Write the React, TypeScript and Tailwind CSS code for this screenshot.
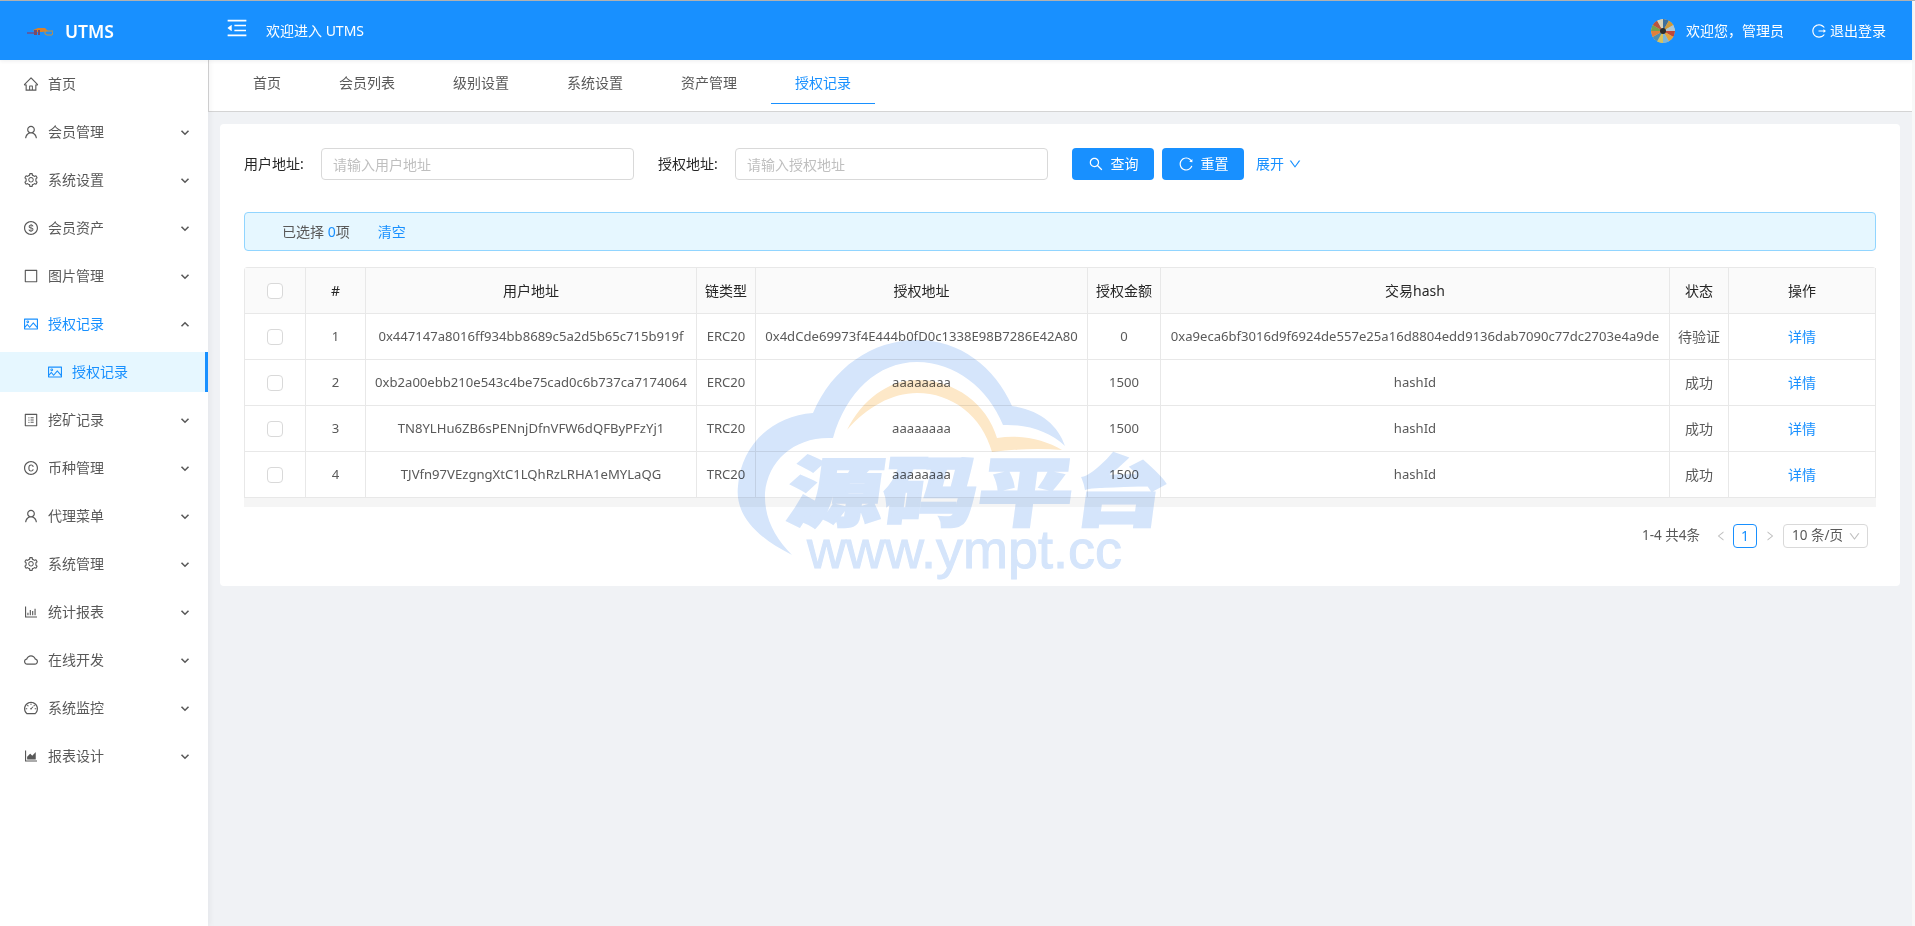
import type { ReactNode } from "react";
import {
  AiOutlineAreaChart,
  AiOutlineBarChart,
  AiOutlineBorder,
  AiOutlineCloud,
  AiOutlineCopyrightCircle,
  AiOutlineDashboard,
  AiOutlineDollarCircle,
  AiOutlineDown,
  AiOutlineHome,
  AiOutlineLeft,
  AiOutlineLogout,
  AiOutlineMenuFold,
  AiOutlinePicture,
  AiOutlineProfile,
  AiOutlineReload,
  AiOutlineRight,
  AiOutlineSearch,
  AiOutlineSetting,
  AiOutlineUser,
} from "react-icons/ai";

const menu: { icon: ReactNode; label: string; noArrow?: boolean; open?: boolean }[] = [
  { icon: <AiOutlineHome />, label: "首页", noArrow: true },
  { icon: <AiOutlineUser />, label: "会员管理" },
  { icon: <AiOutlineSetting />, label: "系统设置" },
  { icon: <AiOutlineDollarCircle />, label: "会员资产" },
  { icon: <AiOutlineBorder />, label: "图片管理" },
  { icon: <AiOutlinePicture />, label: "授权记录", open: true },
  { icon: <AiOutlineProfile />, label: "挖矿记录" },
  { icon: <AiOutlineCopyrightCircle />, label: "币种管理" },
  { icon: <AiOutlineUser />, label: "代理菜单" },
  { icon: <AiOutlineSetting />, label: "系统管理" },
  { icon: <AiOutlineBarChart />, label: "统计报表" },
  { icon: <AiOutlineCloud />, label: "在线开发" },
  { icon: <AiOutlineDashboard />, label: "系统监控" },
  { icon: <AiOutlineAreaChart />, label: "报表设计" },
];

const tabs = ["首页", "会员列表", "级别设置", "系统设置", "资产管理", "授权记录"];

const rows = [
  ["1", "0x447147a8016ff934bb8689c5a2d5b65c715b919f", "ERC20", "0x4dCde69973f4E444b0fD0c1338E98B7286E42A80", "0", "0xa9eca6bf3016d9f6924de557e25a16d8804edd9136dab7090c77dc2703e4a9de", "待验证"],
  ["2", "0xb2a00ebb210e543c4be75cad0c6b737ca7174064", "ERC20", "aaaaaaaa", "1500", "hashId", "成功"],
  ["3", "TN8YLHu6ZB6sPENnjDfnVFW6dQFByPFzYj1", "TRC20", "aaaaaaaa", "1500", "hashId", "成功"],
  ["4", "TJVfn97VEzgngXtC1LQhRzLRHA1eMYLaQG", "TRC20", "aaaaaaaa", "1500", "hashId", "成功"],
];

const wedges = ["#c0483a", "#e2a33c", "#7fb6d8", "#d9c25a", "#4d8fb0", "#e0803a", "#76a04f", "#b8553f", "#d8d2b8", "#3f6f9a", "#cf9a3a", "#a9c7d9"];

const Chevron = ({ up = false }: { up?: boolean }) => (
  <svg width="10" height="7" viewBox="0 0 10 7" className="ml-auto mr-[18px]" fill="none" stroke="#595959" strokeWidth="1.6">
    <path d={up ? "M1.5 5.2 5 1.8l3.5 3.4" : "M1.5 1.8 5 5.2l3.5-3.4"} />
  </svg>
);

const Checkbox = () => (
  <span className="mx-auto block w-4 h-4 bg-white border border-[#d9d9d9] rounded-sm" />
);

const Avatar = () => (
  <svg width="24" height="24" viewBox="0 0 24 24" className="rounded-full">
    <circle cx="12" cy="12" r="12" fill="#c9c2a8" />
    {wedges.map((c, i) => {
      const a0 = (i * Math.PI) / 6;
      const a1 = ((i + 1) * Math.PI) / 6;
      return (
        <path
          key={i}
          fill={c}
          d={`M12 12L${12 + 12 * Math.cos(a0)} ${12 + 12 * Math.sin(a0)}A12 12 0 0 1 ${12 + 12 * Math.cos(a1)} ${12 + 12 * Math.sin(a1)}Z`}
        />
      );
    })}
    <circle cx="12" cy="12" r="3" fill="#2b2b2b" />
  </svg>
);

const Logo = () => (
  <svg width="26" height="9" viewBox="0 0 26 9" className="mr-3">
    <path d="M0 5h8v2H0z" fill="#5a5fa8" />
    <path d="M6 3 11 1h7l3 3-6 1H8z" fill="#d9822b" />
    <path d="M7 3h3v5H7zM11 3h2v5h-2z" fill="#7a4a6a" />
    <path d="M18 4h8v1l-1 3h-5l-2-1z" fill="none" stroke="#c9913a" strokeWidth="1" />
  </svg>
);

const Watermark = () => (
  <div className="absolute left-[730px] top-[335px] w-[445px] h-[250px] pointer-events-none mix-blend-multiply">
    <svg width="445" height="250" viewBox="730 335 445 250" className="absolute inset-0">
      <path
        fill="#d5e5fb"
        d="M792 555C752 535 735 512 738 486C741 445 772 416 813 413C832 368 872 340 917 340C960 340 995 367 1012 406C1040 410 1058 425 1065 446C1050 432 1028 424 1003 425C988 388 955 362 917 362C878 362 846 392 833 438C795 436 768 460 765 493C764 518 775 538 792 555Z"
      />
      <path
        fill="#fde8c8"
        d="M847 430C862 400 888 380 917 380C955 380 987 404 997 438C1022 434 1045 440 1062 450C1040 448 1015 449 992 452C982 416 952 393 917 393C892 393 867 407 847 430Z"
      />
    </svg>
    <div className="absolute left-[64px] top-[114px] text-[95px] leading-none whitespace-nowrap origin-top -skew-x-6 scale-y-[0.8] font-black text-[#d5e5fb] [-webkit-text-stroke:3px_#d5e5fb] font-['Noto_Sans_CJK_SC',sans-serif]">
      源码平台
    </div>
    <div className="absolute left-[77px] top-[187px] text-[54px] leading-none whitespace-nowrap text-[#d5e5fb] [-webkit-text-stroke:1px_#d5e5fb] font-['Liberation_Sans',sans-serif]">
      www.ympt.cc
    </div>
  </div>
);

export default function App() {
  return (
    <div className="relative flex flex-col h-screen overflow-hidden bg-[#f8f8f8] text-sm text-[#595959] font-['Noto_Sans','Noto_Sans_CJK_SC',sans-serif]">
      <div className="h-px bg-[#b4b4b4] shrink-0" />
      <div className="flex flex-col flex-1 min-h-0 mr-[3px]">
        <header className="relative z-10 flex items-center h-[59px] shrink-0 bg-[#1890ff] text-white shadow-[0_1px_4px_rgba(0,21,41,0.08)]">
          <div className="flex items-center w-[225px] pl-[27px] pt-px">
            <Logo />
            <span className="text-[17.5px] font-semibold">UTMS</span>
          </div>
          <AiOutlineMenuFold className="text-[24px] mb-[5px]" />
          <span className="ml-[17px]">欢迎进入 UTMS</span>
          <div className="flex items-center ml-auto mr-[26px]">
            <Avatar />
            <span className="ml-[11px]">欢迎您，管理员</span>
            <AiOutlineLogout className="ml-[27px] mr-[3px] text-base" />
            <span>退出登录</span>
          </div>
        </header>

        <div className="flex flex-1 min-h-0">
          <aside className="w-[208px] shrink-0 bg-white shadow-[2px_0_6px_rgba(0,21,41,0.05)] z-[1]">
            {menu.map((m) => (
              <div key={m.label}>
                <div className="py-1">
                  <div className={`flex items-center h-10 pl-6 ${m.open ? "text-[#1890ff]" : ""}`}>
                    <span className="w-6 text-base [&>svg]:-ml-px">{m.icon}</span>
                    <span className="mb-px">{m.label}</span>
                    {!m.noArrow && <Chevron up={m.open} />}
                  </div>
                </div>
                {m.open && (
                  <div className="py-1">
                    <div className="flex items-center h-10 pl-12 bg-[#e6f7ff] text-[#1890ff] border-r-[3px] border-[#1890ff]">
                      <span className="w-6 text-base [&>svg]:-ml-px">
                        <AiOutlinePicture />
                      </span>
                      <span className="mb-px">授权记录</span>
                    </div>
                  </div>
                )}
              </div>
            ))}
          </aside>

          <main className="flex-1 min-w-0 bg-[#f0f2f5]">
            <nav className="flex h-[52px] pl-5 gap-2.5 bg-white border-l border-b border-[#d4d4d4]">
              {tabs.map((t) => (
                <div
                  key={t}
                  className={`px-6 h-11 leading-[45px] ${t === "授权记录" ? "text-[#1890ff] border-b border-[#1890ff]" : ""}`}
                >
                  {t}
                </div>
              ))}
            </nav>

            <section className="m-3 px-6 pt-6 h-[462px] bg-white rounded-sm">
              <div className="flex items-center h-8 mb-8">
                <label className="w-[77px] text-[#262626]">用户地址:</label>
                <input
                  placeholder="请输入用户地址"
                  className="w-[313px] h-8 px-[11px] border border-[#d9d9d9] rounded placeholder:text-[#bfbfbf]"
                />
                <label className="w-[77px] ml-6 text-[#262626]">授权地址:</label>
                <input
                  placeholder="请输入授权地址"
                  className="w-[313px] h-8 px-[11px] border border-[#d9d9d9] rounded placeholder:text-[#bfbfbf]"
                />
                <button className="flex items-center justify-center w-[82px] h-8 ml-6 gap-[7px] rounded bg-[#1890ff] text-white">
                  <AiOutlineSearch className="text-base" />
                  查询
                </button>
                <button className="flex items-center justify-center w-[82px] h-8 ml-2 gap-[7px] rounded bg-[#1890ff] text-white">
                  <AiOutlineReload className="text-base" />
                  重置
                </button>
                <a className="flex items-center ml-3 gap-1 text-[#1890ff]">
                  展开 <AiOutlineDown className="text-sm" />
                </a>
              </div>

              <div className="flex items-center h-[39px] mb-4 pl-[37px] bg-[#e6f7ff] border border-[#91d5ff] rounded">
                <span>
                  已选择 <span className="text-[#1890ff]">0</span>项
                </span>
                <a className="ml-7 text-[#1890ff]">清空</a>
              </div>

              <div className="bg-[#f5f5f5] pb-[9px] rounded-t">
                <table className="w-full table-fixed border-separate border-spacing-0 text-center bg-white border-l border-t border-[#e8e8e8] rounded-t">
                  <colgroup>
                    <col className="w-[61px]" />
                    <col className="w-[60px]" />
                    <col className="w-[331px]" />
                    <col className="w-[59px]" />
                    <col className="w-[332px]" />
                    <col className="w-[73px]" />
                    <col className="w-[509px]" />
                    <col className="w-[59px]" />
                    <col />
                  </colgroup>
                  <thead>
                    <tr className="h-[46px] bg-[#fafafa] text-[#262626] [&>th]:font-normal [&>th]:border-r [&>th]:border-b [&>th]:border-[#e8e8e8]">
                      <th><Checkbox /></th>
                      <th>#</th>
                      <th>用户地址</th>
                      <th>链类型</th>
                      <th>授权地址</th>
                      <th>授权金额</th>
                      <th>交易hash</th>
                      <th>状态</th>
                      <th>操作</th>
                    </tr>
                  </thead>
                  <tbody>
                    {rows.map((r) => (
                      <tr key={r[0]} className="h-[46px] [&>td]:border-r [&>td]:border-b [&>td]:border-[#e8e8e8]">
                        <td><Checkbox /></td>
                        {r.map((c, i) => (
                          <td key={i} className={i === 6 ? "text-sm" : "whitespace-nowrap text-[13.1px]"}>{c}</td>
                        ))}
                        <td className="text-[#1890ff]">详情</td>
                      </tr>
                    ))}
                  </tbody>
                </table>
              </div>

              <div className="flex items-center justify-end h-6 mt-[17px] mr-2">
                <span className="text-[13.5px]">1-4 共4条</span>
                <AiOutlineLeft className="ml-[15px] text-xs text-[#bfbfbf]" />
                <span className="flex items-center justify-center w-6 h-6 ml-1.5 border border-[#1890ff] rounded text-[#1890ff]">1</span>
                <AiOutlineRight className="ml-[7px] text-xs text-[#bfbfbf]" />
                <div className="flex items-center w-[85px] h-6 ml-[7px] pl-2 gap-[5px] border border-[#d9d9d9] rounded text-[13.5px]">
                  10 条/页
                  <AiOutlineDown className="text-[13px] text-[#bfbfbf]" />
                </div>
              </div>
            </section>
          </main>
        </div>
      </div>
      <Watermark />
    </div>
  );
}
